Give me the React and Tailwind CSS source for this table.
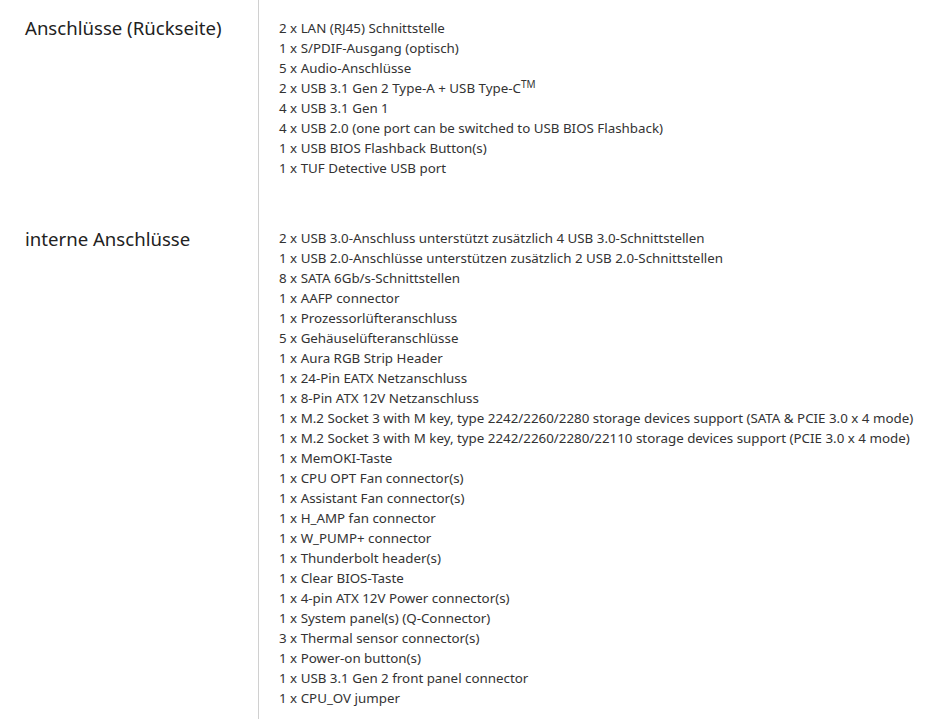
export default function App() {
  const rear = [
    "2 x LAN (RJ45) Schnittstelle",
    "1 x S/PDIF-Ausgang (optisch)",
    "5 x Audio-Anschlüsse",
    "TM",
    "4 x USB 3.1 Gen 1",
    "4 x USB 2.0 (one port can be switched to USB BIOS Flashback)",
    "1 x USB BIOS Flashback Button(s)",
    "1 x TUF Detective USB port",
  ];
  const internal = [
    "2 x USB 3.0-Anschluss unterstützt zusätzlich 4 USB 3.0-Schnittstellen",
    "1 x USB 2.0-Anschlüsse unterstützen zusätzlich 2 USB 2.0-Schnittstellen",
    "8 x SATA 6Gb/s-Schnittstellen",
    "1 x AAFP connector",
    "1 x Prozessorlüfteranschluss",
    "5 x Gehäuselüfteranschlüsse",
    "1 x Aura RGB Strip Header",
    "1 x 24-Pin EATX Netzanschluss",
    "1 x 8-Pin ATX 12V Netzanschluss",
    "1 x M.2 Socket 3 with M key, type 2242/2260/2280 storage devices support (SATA & PCIE 3.0 x 4 mode)",
    "1 x M.2 Socket 3 with M key, type 2242/2260/2280/22110 storage devices support (PCIE 3.0 x 4 mode)",
    "1 x MemOKI-Taste",
    "1 x CPU OPT Fan connector(s)",
    "1 x Assistant Fan connector(s)",
    "1 x H_AMP fan connector",
    "1 x W_PUMP+ connector",
    "1 x Thunderbolt header(s)",
    "1 x Clear BIOS-Taste",
    "1 x 4-pin ATX 12V Power connector(s)",
    "1 x System panel(s) (Q-Connector)",
    "3 x Thermal sensor connector(s)",
    "1 x Power-on button(s)",
    "1 x USB 3.1 Gen 2 front panel connector",
    "1 x CPU_OV jumper",
  ];
  const renderItem = (t, i) =>
    t === "TM" ? (
      <div key={i} className="whitespace-nowrap">
        2 x USB 3.1 Gen 2 Type-A + USB Type-C
        <sup className="text-[10px]">TM</sup>
      </div>
    ) : (
      <div key={i} className="whitespace-nowrap">{t}</div>
    );
  return (
    <div
      className="w-[951px] h-[719px] bg-white overflow-hidden text-[#333]"
      style={{ fontFamily: '"Noto Sans", "Open Sans", sans-serif' }}
    >
      <div className="flex">
        <div className="w-[258px] shrink-0 pl-[25px] pt-[15px] text-[18.6px] leading-[26px] text-[#222]">
          Anschlüsse (Rückseite)
        </div>
        <div className="border-l border-[#d0d0d0] pl-[20px] pt-[18px] pb-[50px] text-[13.35px] leading-[20px]">
          {rear.map(renderItem)}
        </div>
      </div>
      <div className="flex">
        <div className="w-[258px] shrink-0 pl-[25px] text-[18.6px] leading-[26px] text-[#222]">
          <div className="-mt-[2px]">interne Anschlüsse</div>
        </div>
        <div className="border-l border-[#d0d0d0] pl-[20px] pb-[40px] text-[13.35px] leading-[20px]">
          {internal.map(renderItem)}
        </div>
      </div>
    </div>
  );
}
